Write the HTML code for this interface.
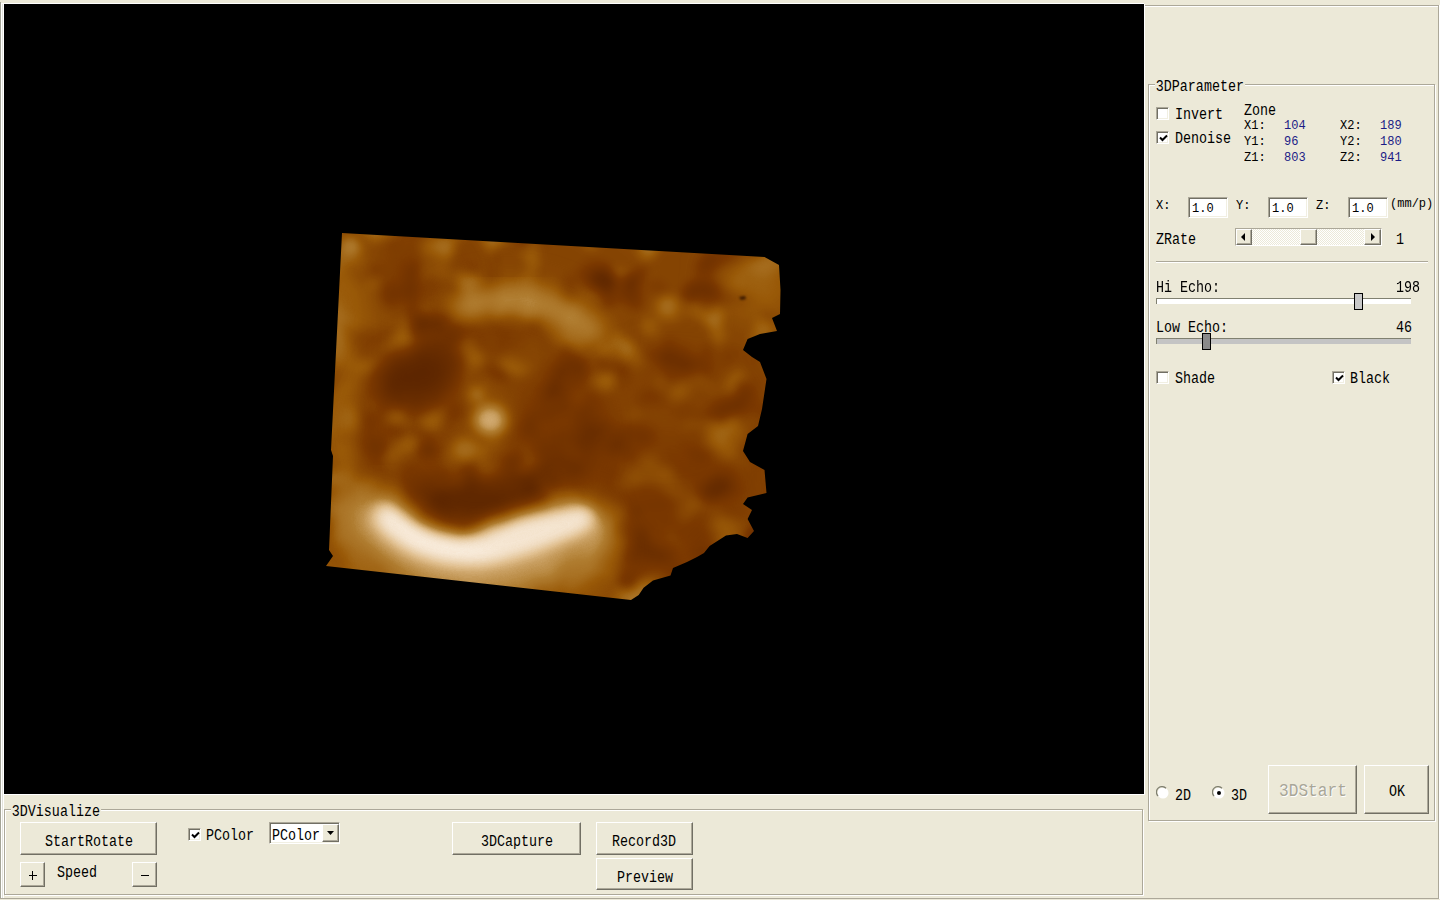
<!DOCTYPE html>
<html><head><meta charset="utf-8">
<style>
html,body{margin:0;padding:0;width:1440px;height:900px;overflow:hidden;background:#ECE9D8;}
body{position:relative;font-family:"Liberation Mono",monospace;color:#000;}
.a{position:absolute;}
.t{position:absolute;white-space:pre;font-size:16px;line-height:16px;transform-origin:0 0;transform:scaleX(0.834);}
.s{position:absolute;white-space:pre;font-size:13.5px;line-height:14px;transform-origin:0 0;transform:scaleX(0.89);}
.grp{position:absolute;box-sizing:border-box;border:1px solid #ACA899;box-shadow:1px 1px 0 0 #fff, inset 1px 1px 0 #fff;}
.btn{position:absolute;box-sizing:border-box;background:#ECE9D8;border-top:1px solid #fff;border-left:1px solid #fff;border-right:1px solid #716F64;border-bottom:1px solid #716F64;box-shadow:inset -1px -1px 0 #ACA899;}
.chk{position:absolute;box-sizing:border-box;width:13px;height:13px;background:#fff;border-top:1px solid #ACA899;border-left:1px solid #ACA899;border-right:1px solid #fff;border-bottom:1px solid #fff;box-shadow:inset 1px 1px 0 #716F64, inset -1px -1px 0 #F1EFE2;}
.edit{position:absolute;box-sizing:border-box;background:#fff;border-top:1px solid #ACA899;border-left:1px solid #ACA899;border-right:1px solid #fff;border-bottom:1px solid #fff;box-shadow:inset 1px 1px 0 #716F64, inset -1px -1px 0 #F1EFE2;}
.blue{color:#1b1b86;}
</style></head>
<body>
<!-- left sunken frame around view -->
<div class="a" style="left:0;top:0;width:1440px;height:900px;"></div>
<div class="a" style="left:0;top:2px;width:1px;height:896px;background:#A4A496;"></div>
<div class="a" style="left:1px;top:3px;width:3px;height:895px;background:#fff;"></div>
<div class="a" style="left:2px;top:4px;width:1px;height:894px;background:#E2E2DA;"></div>
<div class="a" style="left:2px;top:3px;width:1142px;height:1px;background:#fff;"></div>
<div class="a" style="left:0;top:898px;width:1440px;height:1px;background:#ACA899;"></div>
<!-- black view -->
<div class="a" id="view" style="left:4px;top:4px;width:1140px;height:790px;background:#000;overflow:hidden;">
<svg class="a" style="left:0;top:0" width="1140" height="790" viewBox="4 4 1140 790">
<defs>
<clipPath id="cp"><path d="M342 233 L764.5 257 L779 265 L780.5 290 L780 314 L776 316 L772 318 L777 331 L760 334 L747.6 339 L743 350 L752 357 L760 362 L766.5 379 L762 409 L758 426 L747.6 434 L743 451 L750 462 L764.5 470 L766.5 493 L747.6 497.6 L743 504 L752 510 L747.6 519 L754 531 L747.6 538 L737 534 L726 535.6 L709.6 546 L704 553 L697 557 L687 562 L673 568 L670.5 575.6 L653 580.5 L643.6 587.8 L638.7 595 L631 600 L326 566 L333 556 L329 550 L333 456 L331 450 Z"/></clipPath>
<filter id="b1" x="-50%" y="-50%" width="200%" height="200%" color-interpolation-filters="sRGB"><feGaussianBlur stdDeviation="1"/></filter>
<filter id="b4" x="-50%" y="-50%" width="200%" height="200%" color-interpolation-filters="sRGB"><feGaussianBlur stdDeviation="4"/></filter>
<filter id="b6" x="-50%" y="-50%" width="200%" height="200%" color-interpolation-filters="sRGB"><feGaussianBlur stdDeviation="6"/></filter>
<filter id="b8" x="-50%" y="-50%" width="200%" height="200%" color-interpolation-filters="sRGB"><feGaussianBlur stdDeviation="8"/></filter>
<filter id="b10" x="-50%" y="-50%" width="200%" height="200%" color-interpolation-filters="sRGB"><feGaussianBlur stdDeviation="10"/></filter>
<filter id="b14" x="-50%" y="-50%" width="200%" height="200%" color-interpolation-filters="sRGB"><feGaussianBlur stdDeviation="14"/></filter>
<filter id="b22" x="-50%" y="-50%" width="200%" height="200%" color-interpolation-filters="sRGB"><feGaussianBlur stdDeviation="22"/></filter>
<filter id="cmap" x="300" y="220" width="500" height="400" filterUnits="userSpaceOnUse" color-interpolation-filters="sRGB"><feComponentTransfer><feFuncR type="table" tableValues="0.000 0.087 0.175 0.263 0.350 0.382 0.415 0.448 0.480 0.520 0.560 0.600 0.630 0.660 0.690 0.753 0.817 0.880 0.920 0.960 1.000"/><feFuncG type="table" tableValues="0.000 0.035 0.070 0.105 0.140 0.160 0.180 0.200 0.220 0.263 0.307 0.350 0.397 0.443 0.490 0.577 0.663 0.750 0.823 0.897 0.970"/><feFuncB type="table" tableValues="0.000 0.000 0.000 0.000 0.000 0.000 0.000 0.000 0.000 0.010 0.020 0.030 0.083 0.137 0.190 0.313 0.437 0.560 0.687 0.813 0.940"/></feComponentTransfer></filter>
<filter id="texL" x="300" y="220" width="500" height="400" filterUnits="userSpaceOnUse" color-interpolation-filters="sRGB"><feTurbulence type="fractalNoise" baseFrequency="0.024" numOctaves="2" seed="7"/><feColorMatrix type="matrix" values="0 0 0 0 1  0 0 0 0 1  0 0 0 0 1  3 0 0 0 -1.5"/><feGaussianBlur stdDeviation="4"/></filter>
<filter id="texD" x="300" y="220" width="500" height="400" filterUnits="userSpaceOnUse" color-interpolation-filters="sRGB"><feTurbulence type="fractalNoise" baseFrequency="0.026" numOctaves="2" seed="11"/><feColorMatrix type="matrix" values="0 0 0 0 0  0 0 0 0 0  0 0 0 0 0  3 0 0 0 -1.5"/><feGaussianBlur stdDeviation="4"/></filter>
</defs>
<g clip-path="url(#cp)">
<g filter="url(#cmap)">
<rect x="300" y="220" width="500" height="400" fill="#747474"/>
<rect x="300" y="220" width="500" height="400" filter="url(#texL)" opacity="0.55"/>
<rect x="300" y="220" width="500" height="400" filter="url(#texD)" opacity="0.45"/>
<g filter="url(#b22)">
<ellipse cx="670" cy="470" rx="80" ry="110" fill="#505050" opacity="0.4"/>
<ellipse cx="405" cy="275" rx="55" ry="22" fill="#505050" opacity="0.5"/>
<rect x="324" y="250" width="40" height="320" fill="#ACACAC" opacity="0.8"/>
<ellipse cx="470" cy="582" rx="150" ry="20" fill="#AAAAAA" opacity="0.85"/>
<ellipse cx="758" cy="282" rx="32" ry="32" fill="#AAAAAA" opacity="0.85"/>
<ellipse cx="665" cy="410" rx="60" ry="30" fill="#8C8C8C" opacity="0.45"/>
<ellipse cx="478" cy="430" rx="80" ry="62" fill="#484848" opacity="0.15"/>
<ellipse cx="485" cy="425" rx="35" ry="30" fill="#8C8C8C" opacity="0.5"/>
</g>
<g filter="url(#b14)">
<ellipse cx="478" cy="428" rx="108" ry="88" stroke="#383838" stroke-width="30" fill="none" opacity="0.45"/>
<ellipse cx="420" cy="376" rx="44" ry="28" fill="#303030" opacity="0.85"/>
<ellipse cx="478" cy="500" rx="80" ry="22" fill="#303030" opacity="0.8"/>
<path d="M450 312 Q535 272 602 342" stroke="#9C9C9C" stroke-width="34" fill="none" opacity="0.7"/>
<path d="M458 382 L512 434" stroke="#9A9A9A" stroke-width="22" fill="none" opacity="0.8"/>
<ellipse cx="552" cy="435" rx="40" ry="35" fill="#404040" opacity="0.5"/>
<ellipse cx="530" cy="355" rx="30" ry="12" fill="#9C9C9C" opacity="0.6"/>
</g>
<g filter="url(#b14)">
<path d="M360 500 C395 548 440 570 480 568 C525 564 565 548 605 525" stroke="#C8C8C8" stroke-width="62" fill="none" opacity="0.9"/>
</g>
<g filter="url(#b10)">
<path d="M455 310 Q535 276 598 338" stroke="#C4C4C4" stroke-width="20" fill="none" opacity="0.9"/>
</g>
<g filter="url(#b8)">
<path d="M382 510 C408 538 440 552 480 550 C520 546 555 530 588 515" stroke="#FFFFFF" stroke-width="14" fill="none"/>
</g>
<g filter="url(#b10)">
<path d="M378 510 C400 540 440 556 480 552 C520 548 555 530 592 514" stroke="#FAFAFA" stroke-width="22" fill="none"/>
<ellipse cx="530" cy="530" rx="55" ry="19" transform="rotate(-14 530 530)" fill="#F4F4F4"/>
<ellipse cx="440" cy="548" rx="40" ry="10" transform="rotate(8 440 548)" fill="#FCFCFC"/>
</g>
<g filter="url(#b6)">
<ellipse cx="490" cy="420" rx="16" ry="15" fill="#CCCCCC"/>
<ellipse cx="465" cy="450" rx="14" ry="12" fill="#ACACAC" opacity="0.8"/>
<ellipse cx="396" cy="418" rx="10" ry="6" fill="#A4A4A4" opacity="0.8"/>
<circle cx="477" cy="394" r="7" fill="#BCBCBC" opacity="0.9"/>
<circle cx="351" cy="247" r="10" fill="#B8B8B8"/>

<ellipse cx="335" cy="330" rx="8" ry="30" fill="#ACACAC" opacity="0.7"/>
<ellipse cx="350" cy="420" rx="10" ry="14" fill="#A8A8A8" opacity="0.6"/>
</g>
</g>
<path d="M739 297 L745 296 L746 299 L741 300 Z" fill="#2A1000" opacity="0.8" filter="url(#b1)"/>
</g>
</svg>
</div>
<div class="a" style="left:1144px;top:4px;width:1px;height:791px;background:#fff;"></div>
<div class="a" style="left:4px;top:794px;width:1141px;height:1px;background:#fff;"></div>

<!-- right panel frame -->
<div class="a" style="left:1145px;top:5px;width:294px;height:1px;background:#ACA899;"></div>
<div class="a" style="left:1145px;top:6px;width:293px;height:1px;background:#fff;"></div>
<div class="a" style="left:1438px;top:5px;width:1px;height:894px;background:#ACA899;"></div>
<div class="a" style="left:1439px;top:5px;width:1px;height:894px;background:#fff;"></div>

<!-- 3DParameter group -->
<div class="grp" style="left:1148px;top:84px;width:287px;height:737px;"></div>
<div class="t" style="left:1155px;top:79px;background:#ECE9D8;padding:0 1px;">3DParameter</div>


<!-- checkboxes -->
<div class="chk" style="left:1156px;top:107px;"></div>
<div class="t" style="left:1175px;top:107px;">Invert</div>
<div class="chk" style="left:1156px;top:131px;"><svg class="a" style="left:2px;top:2px" width="9" height="9"><path d="M1 3.5 L3.5 6 L8 1.5" stroke="#000" stroke-width="2" fill="none"/></svg></div>
<div class="t" style="left:1175px;top:131px;">Denoise</div>
<div class="t" style="left:1244px;top:103px;">Zone</div>
<div class="s" style="left:1244px;top:119px;">X1:</div>
<div class="s" style="left:1244px;top:135px;">Y1:</div>
<div class="s" style="left:1244px;top:151px;">Z1:</div>
<div class="s blue" style="left:1284px;top:119px;">104</div>
<div class="s blue" style="left:1284px;top:135px;">96</div>
<div class="s blue" style="left:1284px;top:151px;">803</div>
<div class="s" style="left:1340px;top:119px;">X2:</div>
<div class="s" style="left:1340px;top:135px;">Y2:</div>
<div class="s" style="left:1340px;top:151px;">Z2:</div>
<div class="s blue" style="left:1380px;top:119px;">189</div>
<div class="s blue" style="left:1380px;top:135px;">180</div>
<div class="s blue" style="left:1380px;top:151px;">941</div>

<!-- X Y Z edits -->
<div class="s" style="left:1156px;top:199px;">X:</div>
<div class="edit" style="left:1188px;top:197px;width:40px;height:21px;"></div>
<div class="s" style="left:1192px;top:202px;">1.0</div>
<div class="s" style="left:1236px;top:199px;">Y:</div>
<div class="edit" style="left:1268px;top:197px;width:40px;height:21px;"></div>
<div class="s" style="left:1272px;top:202px;">1.0</div>
<div class="s" style="left:1316px;top:199px;">Z:</div>
<div class="edit" style="left:1348px;top:197px;width:40px;height:21px;"></div>
<div class="s" style="left:1352px;top:202px;">1.0</div>
<div class="s" style="left:1390px;top:197px;">(mm/p)</div>

<!-- ZRate scrollbar -->
<div class="t" style="left:1156px;top:232px;">ZRate</div>
<div class="a" style="left:1235px;top:228px;width:147px;height:18px;box-sizing:border-box;border-top:1px solid #ACA899;border-left:1px solid #ACA899;border-right:1px solid #fff;border-bottom:1px solid #fff;background:repeating-conic-gradient(#ECE9D8 0 25%,#fff 0 50%) 0 0/2px 2px;"></div>
<div class="btn" style="left:1236px;top:229px;width:16px;height:16px;"><svg class="a" style="left:4px;top:3px" width="6" height="8"><path d="M4 0 L4 8 L0 4 Z" fill="#000"/></svg></div>
<div class="btn" style="left:1300px;top:229px;width:17px;height:16px;"></div>
<div class="btn" style="left:1364px;top:229px;width:17px;height:16px;"><svg class="a" style="left:6px;top:3px" width="6" height="8"><path d="M0 0 L0 8 L4 4 Z" fill="#000"/></svg></div>
<div class="t" style="left:1396px;top:232px;">1</div>

<!-- separator -->
<div class="a" style="left:1156px;top:261px;width:272px;height:1px;background:#ACA899;"></div>
<div class="a" style="left:1156px;top:262px;width:272px;height:1px;background:#fff;"></div>

<!-- Hi echo -->
<div class="t" style="left:1156px;top:280px;">Hi Echo:</div>
<div class="t" style="left:1396px;top:280px;">198</div>
<div class="a" style="left:1156px;top:298px;width:255px;height:6px;background:#fff;border-top:1px solid #808070;border-left:1px solid #808070;box-sizing:border-box;"></div>
<div class="a" style="left:1354px;top:293px;width:9px;height:17px;background:#C8C8C8;border:1px solid #000;box-sizing:border-box;"></div>

<!-- Low echo -->
<div class="t" style="left:1156px;top:320px;">Low Echo:</div>
<div class="t" style="left:1396px;top:320px;">46</div>
<div class="a" style="left:1156px;top:338px;width:255px;height:6px;background:#C4C4C4;border-top:1px solid #808070;border-left:1px solid #808070;box-sizing:border-box;"></div>
<div class="a" style="left:1202px;top:333px;width:9px;height:17px;background:#8A8A8A;border:1px solid #000;box-sizing:border-box;"></div>

<!-- Shade / Black -->
<div class="chk" style="left:1156px;top:371px;"></div>
<div class="t" style="left:1175px;top:371px;">Shade</div>
<div class="chk" style="left:1332px;top:371px;"><svg class="a" style="left:2px;top:2px" width="9" height="9"><path d="M1 3.5 L3.5 6 L8 1.5" stroke="#000" stroke-width="2" fill="none"/></svg></div>
<div class="t" style="left:1350px;top:371px;">Black</div>

<!-- radios -->
<svg class="a" style="left:1156px;top:786px" width="14" height="14"><circle cx="7" cy="7" r="5.5" fill="#fff"/><path d="M2 10 A5.5 5.5 0 0 1 10 2.3" stroke="#808070" stroke-width="1.3" fill="none"/></svg>
<div class="t" style="left:1175px;top:788px;">2D</div>
<svg class="a" style="left:1212px;top:786px" width="14" height="14"><circle cx="7" cy="7" r="5.5" fill="#fff"/><path d="M2 10 A5.5 5.5 0 0 1 10 2.3" stroke="#808070" stroke-width="1.3" fill="none"/><circle cx="7" cy="7" r="2" fill="#000"/></svg>
<div class="t" style="left:1231px;top:788px;">3D</div>

<!-- 3DStart / OK -->
<div class="btn" style="left:1268px;top:765px;width:89px;height:49px;"></div>
<div class="a" style="left:1279px;top:782px;white-space:pre;font-size:19px;line-height:19px;color:#A8A698;transform-origin:0 0;transform:scaleX(0.85);text-shadow:1px 1px 0 #fff;">3DStart</div>
<div class="btn" style="left:1364px;top:765px;width:65px;height:49px;"></div>
<div class="t" style="left:1389px;top:784px;">OK</div>


<!-- 3DVisualize group -->
<div class="grp" style="left:4px;top:809px;width:1139px;height:86px;"></div>
<div class="t" style="left:11px;top:804px;background:#ECE9D8;padding:0 1px;">3DVisualize</div>


<div class="btn" style="left:20px;top:822px;width:137px;height:33px;"></div>
<div class="t" style="left:45px;top:834px;">StartRotate</div>
<div class="btn" style="left:20px;top:862px;width:25px;height:25px;"></div>
<div class="a" style="left:29px;top:875px;width:8px;height:1px;background:#000;"></div>
<div class="a" style="left:32px;top:871px;width:1px;height:9px;background:#000;"></div>
<div class="t" style="left:57px;top:865px;">Speed</div>
<div class="btn" style="left:132px;top:862px;width:25px;height:25px;"></div>
<div class="a" style="left:141px;top:875px;width:8px;height:1px;background:#000;"></div>

<div class="chk" style="left:188px;top:828px;"><svg class="a" style="left:2px;top:2px" width="9" height="9"><path d="M1 3.5 L3.5 6 L8 1.5" stroke="#000" stroke-width="2" fill="none"/></svg></div>
<div class="t" style="left:206px;top:828px;">PColor</div>
<div class="edit" style="left:269px;top:822px;width:71px;height:22px;"></div>
<div class="t" style="left:272px;top:828px;">PColor</div>
<div class="btn" style="left:322px;top:824px;width:17px;height:18px;"><svg class="a" style="left:4px;top:6px" width="8" height="5"><path d="M0 0 L7 0 L3.5 4 Z" fill="#000"/></svg></div>

<div class="btn" style="left:452px;top:822px;width:129px;height:33px;"></div>
<div class="t" style="left:481px;top:834px;">3DCapture</div>
<div class="btn" style="left:596px;top:822px;width:97px;height:33px;"></div>
<div class="t" style="left:612px;top:834px;">Record3D</div>
<div class="btn" style="left:596px;top:858px;width:97px;height:32px;"></div>
<div class="t" style="left:617px;top:870px;">Preview</div>


</body></html>
